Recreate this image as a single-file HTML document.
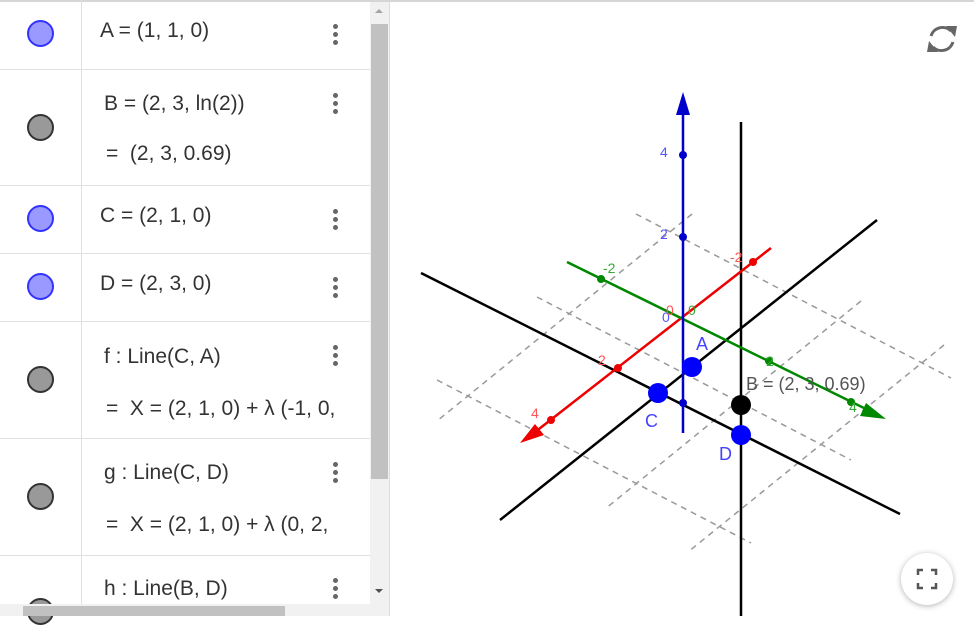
<!DOCTYPE html>
<html><head><meta charset="utf-8"><style>
*{margin:0;padding:0;box-sizing:border-box}
body{width:974px;height:616px;overflow:hidden;background:#fff;font-family:"Liberation Sans",sans-serif;position:relative}
.top{position:absolute;left:0;top:0;width:974px;height:2px;background:#d6d6d6}
.row{position:absolute;left:0;width:370px;border-bottom:1px solid #e0e0e0}
.vdiv{position:absolute;left:81px;top:0;width:1px;height:604px;background:#e0e0e0}
.dot{position:absolute;left:27px;width:27px;height:27px;border-radius:50%}
.blue{background:#9999ff;border:2px solid #3333ff}
.gray{background:#999;border:2px solid #333}
.t{position:absolute;left:100px;font-size:21px;color:#333;white-space:nowrap}
.m{position:absolute;left:333px;width:5px}
.m i{display:block;width:5px;height:5px;border-radius:50%;background:#666;margin-bottom:3px}
</style></head><body>
<div class="top"></div>
<div class="row" style="top:0;height:70px"></div>
<div class="row" style="top:70px;height:116px"></div>
<div class="row" style="top:186px;height:68px"></div>
<div class="row" style="top:254px;height:68px"></div>
<div class="row" style="top:322px;height:117px"></div>
<div class="row" style="top:439px;height:117px"></div>
<div class="vdiv"></div>
<div class="dot blue" style="top:20px"></div>
<div class="dot gray" style="top:114px"></div>
<div class="dot blue" style="top:205px"></div>
<div class="dot blue" style="top:273px"></div>
<div class="dot gray" style="top:366px"></div>
<div class="dot gray" style="top:483px"></div>
<div class="dot gray" style="top:598px"></div>
<div class="t" style="top:19px">A = (1, 1, 0)</div>
<div class="t" style="top:92px;left:104px">B = (2, 3, ln(2))</div>
<div class="t" style="top:142px;left:106px">=&nbsp; (2, 3, 0.69)</div>
<div class="t" style="top:204px">C = (2, 1, 0)</div>
<div class="t" style="top:272px">D = (2, 3, 0)</div>
<div class="t" style="top:345px;left:104px">f : Line(C, A)</div>
<div class="t" style="top:397px;left:106px">=&nbsp; X = (2, 1, 0) + λ (-1, 0,</div>
<div class="t" style="top:461px;left:104px">g : Line(C, D)</div>
<div class="t" style="top:513px;left:106px">=&nbsp; X = (2, 1, 0) + λ (0, 2,</div>
<div class="t" style="top:577px;left:104px">h : Line(B, D)</div>
<div class="m" style="top:24px"><i></i><i></i><i></i></div>
<div class="m" style="top:93px"><i></i><i></i><i></i></div>
<div class="m" style="top:209px"><i></i><i></i><i></i></div>
<div class="m" style="top:277px"><i></i><i></i><i></i></div>
<div class="m" style="top:345px"><i></i><i></i><i></i></div>
<div class="m" style="top:462px"><i></i><i></i><i></i></div>
<div class="m" style="top:578px"><i></i><i></i><i></i></div>
<div style="position:absolute;left:370px;top:2px;width:19px;height:602px;background:#f1f1f1"></div>
<div style="position:absolute;left:371px;top:24px;width:17px;height:455px;background:#c1c1c1"></div>
<div style="position:absolute;left:375px;top:9px;width:0;height:0;border-left:4px solid transparent;border-right:4px solid transparent;border-bottom:4px solid #a3a3a3"></div>
<div style="position:absolute;left:375px;top:589px;width:0;height:0;border-left:4px solid transparent;border-right:4px solid transparent;border-top:4px solid #505050"></div>
<div style="position:absolute;left:0;top:604px;width:389px;height:12px;background:#f1f1f1"></div>
<div style="position:absolute;left:23px;top:606px;width:262px;height:10px;background:#c1c1c1"></div>
<div style="position:absolute;left:389px;top:2px;width:12px;height:614px;background:#fff;border-left:1px solid #ddd"></div>
<svg style="position:absolute;left:0;top:0" width="974" height="616">
<g stroke="#999" stroke-width="1.5" stroke-dasharray="6,5" fill="none">
<line x1="636" y1="214" x2="951" y2="378"/>
<line x1="537" y1="297" x2="851" y2="460"/>
<line x1="437" y1="380" x2="751" y2="543"/>
<line x1="692" y1="214" x2="437" y2="421"/>
<line x1="861" y1="301" x2="605" y2="509"/>
<line x1="944" y1="345" x2="688" y2="552"/>
</g>
<g stroke="#000" stroke-width="2.5">
<line x1="421" y1="273" x2="900" y2="514"/>
<line x1="500" y1="520" x2="877" y2="220"/>
<line x1="741" y1="122" x2="741" y2="616"/>
</g>
<line x1="530" y1="436" x2="771" y2="248" stroke="#e00" stroke-width="2.5"/>
<polygon points="520,443 535,424 544,435" fill="#e00"/>
<line x1="567" y1="262" x2="868" y2="410" stroke="#080" stroke-width="2.5"/>
<polygon points="886,419 866,403 860,416" fill="#080"/>
<line x1="683" y1="105" x2="683" y2="433" stroke="#00c" stroke-width="2.5"/>
<polygon points="683,92 676,115 690,115" fill="#00c"/>
<g fill="#00c"><circle cx="683" cy="155" r="4"/><circle cx="683" cy="237" r="4"/><circle cx="683" cy="403" r="4"/></g>
<g fill="#e00"><circle cx="753" cy="262" r="4"/><circle cx="618" cy="368" r="4"/><circle cx="551" cy="420" r="4"/></g>
<g fill="#080"><circle cx="601" cy="279" r="4"/><circle cx="769" cy="361" r="4"/><circle cx="851" cy="402" r="4"/></g>
<g font-family="Liberation Sans,sans-serif" font-size="14">
<text x="660" y="157" fill="#55f">4</text><text x="660" y="239" fill="#55f">2</text><text x="662" y="322" fill="#55f">0</text>
<text x="730" y="262" fill="#f55">-2</text><text x="598" y="365" fill="#f55">2</text><text x="531" y="418" fill="#f55">4</text><text x="666" y="315" fill="#f55">0</text>
<text x="603" y="273" fill="#3a3">-2</text><text x="766" y="366" fill="#3a3">2</text><text x="849" y="412" fill="#3a3">4</text><text x="688" y="315" fill="#3a3">0</text>
</g>
<g fill="#00f"><circle cx="692" cy="367" r="10"/><circle cx="658" cy="393" r="10"/><circle cx="741" cy="435" r="10"/></g>
<circle cx="741" cy="405" r="10" fill="#000"/>
<g font-family="Liberation Sans,sans-serif" font-size="18" fill="#44f">
<text x="696" y="350">A</text><text x="645" y="427">C</text><text x="719" y="460">D</text>
</g>
<text x="746" y="390" font-family="Liberation Sans,sans-serif" font-size="18" fill="#555">B = (2, 3, 0.69)</text>
<g fill="none" stroke="#666" stroke-width="3">
<path d="M931,36 A12,12 0 0 1 951,31"/><path d="M953,42 A12,12 0 0 1 933,47"/>
</g>
<polygon points="946,26 957,26 955,37" fill="#666"/><polygon points="938,52 927,52 929,41" fill="#666"/>
<circle cx="927" cy="579" r="26" fill="#fff" style="filter:drop-shadow(0 1px 3px rgba(0,0,0,.3))"/>
<g fill="none" stroke="#555" stroke-width="2.5">
<path d="M918,575v-5h5M931,570h5v5M936,583v5h-5M923,588h-5v-5"/>
</g>
</svg>
</body></html>
